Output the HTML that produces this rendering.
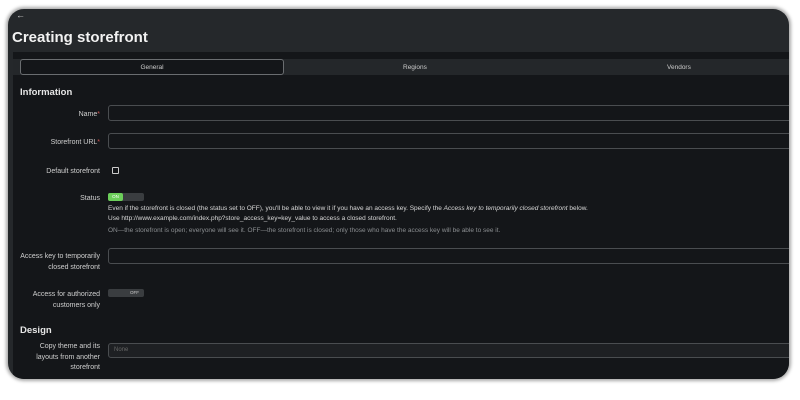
<!DOCTYPE html>
<html><head><style>
*{margin:0;padding:0;box-sizing:border-box}
body{width:800px;height:400px;background:#fff;font-family:"Liberation Sans",sans-serif;position:relative;overflow:hidden}
.win{position:absolute;left:8px;top:9px;width:781px;height:370px;background:#25282b;border-radius:16px;overflow:hidden;box-shadow:0 0 3px 2px #aaa}
.content{position:absolute;left:5px;top:43px;right:0;bottom:0;background:#141619}
.abs{position:absolute}
.lbl{position:absolute;right:689px;color:#d0d0d0;font-size:7px;text-align:right;line-height:10.5px;width:90px;margin-top:2px}
.inp{position:absolute;left:95px;right:-4px;height:16px;border:1px solid #4a4d50;border-radius:3px;background:#141619}
h2{position:absolute;left:7px;color:#e6e6e6;font-size:9.5px;font-weight:bold}
.txt{position:absolute;left:95px;font-size:6.5px;color:#d8d8d8;white-space:nowrap}
</style></head><body>
<div class="win">
<div class="abs" style="left:8px;top:1px;color:#ccc;font-size:9px">←</div>
<div class="abs" style="left:4px;top:20px;color:#f2f2f2;font-size:15px;font-weight:bold">Creating storefront</div>
<div class="content">
<div class="abs" style="left:0;right:0;top:7px;height:16px;background:#24272a"></div>
<div class="abs" style="left:7px;top:7px;width:264px;height:16px;border:1px solid #6a6d70;border-radius:3px;background:#141619;color:#ccc;font-size:6.5px;text-align:center;line-height:15px">General</div>
<div class="abs" style="left:390px;top:12px;color:#ccc;font-size:6.5px">Regions</div>
<div class="abs" style="left:654px;top:12px;color:#ccc;font-size:6.5px">Vendors</div>
<h2 style="top:35px">Information</h2>
<div class="lbl" style="top:56px">Name<span style="color:#c55">*</span></div>
<div class="inp" style="top:53px"></div>
<div class="lbl" style="top:84px">Storefront URL<span style="color:#c55">*</span></div>
<div class="inp" style="top:81px"></div>
<div class="lbl" style="top:113px">Default storefront</div>
<div class="abs" style="left:99px;top:115px;width:7px;height:7px;border:1px solid #ccc;border-radius:1px"></div>
<div class="lbl" style="top:140px">Status</div>
<div class="abs" style="left:95px;top:141px;width:36px;height:8px;background:#3a3d40;border-radius:2px"></div>
<div class="abs" style="left:95px;top:141px;width:15px;height:8px;background:#6ccf5a;border-radius:2px;font-size:4.5px;color:#fff;line-height:8px;text-align:center">ON</div>
<div class="txt" style="top:153px">Even if the storefront is closed (the status set to OFF), you'll be able to view it if you have an access key. Specify the <i>Access key to temporarily closed storefront</i> below.</div>
<div class="txt" style="top:163px">Use http://www.example.com/index.php?store_access_key=key_value to access a closed storefront.</div>
<div class="txt" style="top:175px;color:#8a8d90">ON—the storefront is open; everyone will see it. OFF—the storefront is closed; only those who have the access key will be able to see it.</div>
<div class="lbl" style="top:198px">Access key to temporarily<br>closed storefront</div>
<div class="inp" style="top:196px"></div>
<div class="lbl" style="top:236px">Access for authorized<br>customers only</div>
<div class="abs" style="left:95px;top:237px;width:36px;height:8px;background:#3a3d40;border-radius:2px;font-size:4.5px;color:#ccc;line-height:8px;padding-left:22px">OFF</div>
<h2 style="top:273px">Design</h2>
<div class="lbl" style="top:288px">Copy theme and its<br>layouts from another<br>storefront</div>
<div class="inp" style="top:291px;height:15px;background:#1e2023;color:#666;font-size:6px;line-height:13px;padding-left:5px">None</div>
</div>
</div>
</body></html>
